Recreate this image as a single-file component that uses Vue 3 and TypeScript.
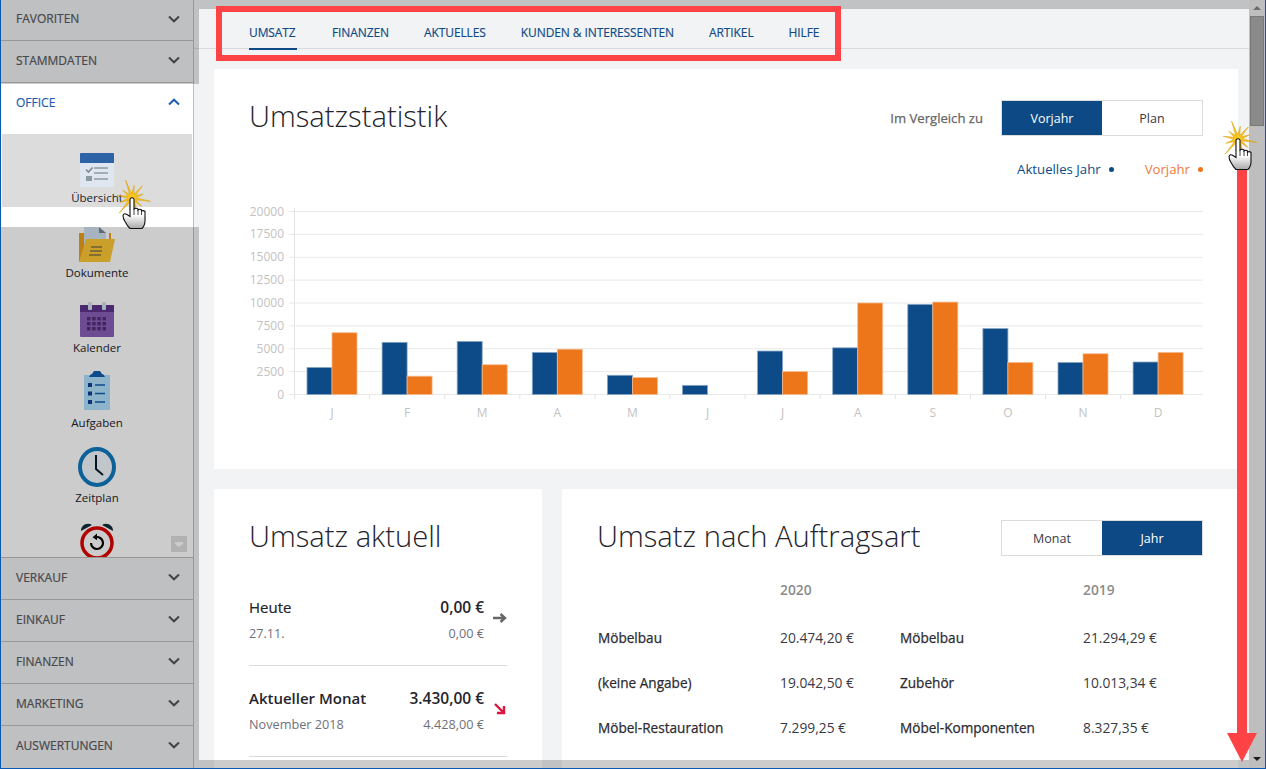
<script setup lang="ts">
const topRows: string[] = ['FAVORITEN', 'STAMMDATEN']
const bottomRows: string[] = ['VERKAUF', 'EINKAUF', 'FINANZEN', 'MARKETING', 'AUSWERTUNGEN']
const tabs: string[] = ['UMSATZ', 'FINANZEN', 'AKTUELLES', 'KUNDEN & INTERESSENTEN', 'ARTIKEL', 'HILFE']
const blue: number[] = [2950, 5700, 5800, 4600, 2100, 1000, 4750, 5100, 9850, 7200, 3500, 3550]
const orange: number[] = [6750, 2000, 3250, 4950, 1850, 0, 2500, 10000, 10100, 3500, 4450, 4600]
const months: string[] = ['J', 'F', 'M', 'A', 'M', 'J', 'J', 'A', 'S', 'O', 'N', 'D']
const ticks: number[] = [0, 2500, 5000, 7500, 10000, 12500, 15000, 17500, 20000]
const X0 = 45
const Y0 = 194.5
const yOf = (v: number): number => Y0 - (v / 20000) * 183
const rows = [
  ['Möbelbau', '20.474,20 €', 'Möbelbau', '21.294,29 €'],
  ['(keine Angabe)', '19.042,50 €', 'Zubehör', '10.013,34 €'],
  ['Möbel-Restauration', '7.299,25 €', 'Möbel-Komponenten', '8.327,35 €'],
]
const burst: string = Array.from({ length: 24 }, (_, i) => {
  const long = [19, 13, 16, 12, 20, 13, 15, 12][(i / 2 | 0) % 8]
  const r = i % 2 === 0 ? long : 4.2
  const a = (i * Math.PI) / 12 + 0.18
  return `${(20 + r * Math.cos(a)).toFixed(1)},${(20 + r * Math.sin(a)).toFixed(1)}`
}).join(' ')
const hands = [
  { left: '111px', top: '178px' },
  { left: '1217px', top: '119px' },
]
</script>

<template>
  <div class="frame">
    <aside class="side">
      <div v-for="r in topRows" :key="r" class="row">
        <span>{{ r }}</span>
        <svg class="chev" viewBox="0 0 12 8" width="12" height="8"><path d="M1 1.5 6 6.3l5-4.8" /></svg>
      </div>
      <div class="row open">
        <span>OFFICE</span>
        <svg class="chev" viewBox="0 0 12 8" width="12" height="8"><path d="M1 6.5 6 1.7l5 4.8" /></svg>
      </div>
      <div class="apps">
        <div class="app active">
          <svg width="36" height="34" viewBox="0 0 36 34">
            <rect x="1" width="34" height="34" rx="1" fill="#dfe6f0" />
            <path d="M1 1a1 1 0 0 1 1-1h32a1 1 0 0 1 1 1v9H1z" fill="#2e62a6" />
            <path d="m7 16.500 2.500 2.500 4-4.500" fill="none" stroke="#7b8a8e" stroke-width="1.600" />
            <rect x="7" y="23" width="6" height="5" fill="#8a9aa0" />
            <path d="M15 15h14M15 20h14M15 26h14" stroke="#8b9ba3" stroke-width="1.500" />
          </svg>
          <span>Übersicht</span>
        </div>
        <div class="app">
          <svg width="38" height="35" viewBox="0 0 38 35">
            <path d="M1 6h6v29H1z" fill="#eda01a" />
            <path d="M31 6h2v10h-2z" fill="#eda01a" />
            <path d="M6 0h14l8 6v18H6z" fill="#d2e0f0" />
            <path d="m21 0 7 6h-7z" fill="#768894" />
            <path d="M8 12h29l-5 23H1z" fill="#fdc836" />
            <path d="M13 20h11M12 24h12M11 28h12" stroke="#8a7640" stroke-width="1.300" />
          </svg>
          <span>Dokumente</span>
        </div>
        <div class="app">
          <svg width="34" height="35" viewBox="0 0 34 35">
            <rect y="3" width="34" height="32" rx="1" fill="#8a5fb8" />
            <path d="M1 3h32a1 1 0 0 1 1 1v6H0V4a1 1 0 0 1 1-1z" fill="#5e348c" />
            <rect x="8" width="4" height="8" rx="1" fill="#d2e0ea" />
            <rect x="22" width="4" height="8" rx="1" fill="#d2e0ea" />
            <g fill="#522d77">
              <rect v-for="n in 12" :key="n" :x="7 + ((n - 1) % 4) * 5.200" :y="15 + (((n - 1) / 4) | 0) * 5" width="3.400" height="3.400" />
            </g>
          </svg>
          <span>Kalender</span>
        </div>
        <div class="app tasks">
          <svg width="26" height="40" viewBox="0 0 26 40">
            <rect y="5" width="26" height="35" fill="#b2e2ff" />
            <path d="M5 7q1-3 3-3l2-3h6l2 3q2 0 3 3z" fill="#105db0" />
            <g fill="#104096">
              <rect x="4" y="13" width="4" height="4" />
              <rect x="4" y="21.500" width="4" height="4" />
              <rect x="4" y="30" width="4" height="4" />
            </g>
            <path d="M11 15h10M11 23.500h10M11 32h10" stroke="#105db0" stroke-width="1.300" />
          </svg>
          <span>Aufgaben</span>
        </div>
        <div class="app">
          <svg width="38" height="40" viewBox="0 0 38 40">
            <ellipse cx="19" cy="20" rx="17" ry="18" fill="#f2f8fe" stroke="#107bbf" stroke-width="4" />
            <path d="M18 8v14l7 6" fill="none" stroke="#0a1a28" stroke-width="2" />
          </svg>
          <span>Zeitplan</span>
        </div>
        <div class="app">
          <svg width="34" height="40" viewBox="0 0 34 40">
            <path d="M1 9a7 7 0 0 1 11-6zM33 9a7 7 0 0 0-11-6z" fill="#122b3c" />
            <circle cx="17" cy="21" r="15" fill="#fff" stroke="#dc0000" stroke-width="3.500" />
            <path d="M11 21a6 6 0 1 0 4.500-5.800" fill="none" stroke="#0a0a0a" stroke-width="2.200" />
            <path d="m17 11.500-4.500 3.700 4.500 3z" fill="#0a0a0a" />
          </svg>
        </div>
        <div class="more"><svg viewBox="0 0 16 16" width="16" height="16"><path d="M4 6h8v2l-4 3-4-3z" fill="#fff" /></svg></div>
      </div>
      <div v-for="r in bottomRows" :key="r" class="row low">
        <span>{{ r }}</span>
        <svg class="chev" viewBox="0 0 12 8" width="12" height="8"><path d="M1 1.500 6 6.300l5-4.800" /></svg>
      </div>
    </aside>

    <main class="main">
      <nav class="tabs">
        <a v-for="(t, i) in tabs" :key="t" :class="{ on: i === 0 }">{{ t }}</a>
      </nav>

      <section class="card stat">
        <div class="head">
          <h1>Umsatzstatistik</h1>
          <div class="cmp">
            <span class="cmp-label">Im Vergleich zu</span>
            <div class="toggle"><b class="sel">Vorjahr</b><b>Plan</b></div>
          </div>
        </div>
        <div class="legend">
          <span class="l-blue">Aktuelles Jahr<i></i></span>
          <span class="l-orange">Vorjahr<i></i></span>
        </div>
        <svg class="chart" width="989" height="240" viewBox="0 0 989 240">
          <g v-for="t in ticks" :key="t">
            <line x1="40" :x2="954" :y1="yOf(t)" :y2="yOf(t)" stroke="#e9e9e9" />
            <text x="35" :y="yOf(t) + 4" text-anchor="end" class="tick">{{ t }}</text>
          </g>
          <line :x1="X0 + 0.500" :x2="X0 + 0.500" y1="8" y2="199" stroke="#e4e4e4" />
          <g v-for="(m, i) in months" :key="i">
            <line :x1="X0 + 0.500 + i * 75.100" :x2="X0 + 0.500 + i * 75.100" :y1="Y0" y2="199" stroke="#e4e4e4" />
            <text :x="X0 + 38 + i * 75.100" y="217" text-anchor="middle" class="tick">{{ m }}</text>
            <rect :x="X0 + 13 + i * 75.100" :y="yOf(blue[i])" width="25" :height="Y0 - yOf(blue[i])" fill="#0c4b87" stroke="#85a5c3" stroke-width="0.800" />
            <rect v-if="orange[i]" :x="X0 + 38 + i * 75.100" :y="yOf(orange[i])" width="25" :height="Y0 - yOf(orange[i])" fill="#ed751a" stroke="#f6ba8c" stroke-width="0.800" />
          </g>
        </svg>
      </section>

      <div class="lower">
        <section class="card now">
          <h1>Umsatz aktuell</h1>
          <div class="kpi">
            <div class="kpi-l"><strong class="plain">Heute</strong><small>27.11.</small></div>
            <div class="kpi-r"><strong>0,00 €</strong><small>0,00 €</small></div>
            <svg class="trend" width="14" height="12" viewBox="0 0 14 12"><path d="M0 6h11M7.500 2 12 6l-4.500 4" fill="none" stroke="#666" stroke-width="2.400" /></svg>
          </div>
          <div class="kpi">
            <div class="kpi-l"><strong>Aktueller Monat</strong><small>November 2018</small></div>
            <div class="kpi-r"><strong>3.430,00 €</strong><small>4.428,00 €</small></div>
            <svg class="trend" width="14" height="12" viewBox="0 0 14 12"><path d="m2 1 8 8M11 3v7H4" fill="none" stroke="#e0143c" stroke-width="2.400" /></svg>
          </div>
        </section>
        <section class="card kind">
          <div class="head">
            <h1>Umsatz nach Auftragsart</h1>
            <div class="toggle"><b>Monat</b><b class="sel">Jahr</b></div>
          </div>
          <div class="table">
            <span></span><em>2020</em><span></span><em>2019</em>
            <template v-for="r in rows" :key="r[0]">
              <strong>{{ r[0] }}</strong><span>{{ r[1] }}</span><strong>{{ r[2] }}</strong><span>{{ r[3] }}</span>
            </template>
          </div>
        </section>
      </div>
    </main>

    <div class="scroll">
      <i class="up"></i>
      <div class="thumb"></div>
      <i class="down"></i>
    </div>

    <div class="dim d-a"></div>
    <div class="dim d-b"></div>
    <div class="dim d-c"></div>
    <div class="dim d-d"></div>

    <div class="red-box"></div>
    <svg class="red-arrow" width="32" height="596" viewBox="0 0 32 596">
      <path d="M11 0h10v565h10L16 594 1 565h10z" fill="#fd4345" />
    </svg>
    <svg v-for="h in hands" :key="h.left" class="hand" :style="h" width="44" height="54" viewBox="0 0 44 54">
      <defs>
        <linearGradient id="hg" x1="0" y1="0" x2="0" y2="1">
          <stop offset="0.550" stop-color="#fff" />
          <stop offset="1" stop-color="#a8a8a8" />
        </linearGradient>
      </defs>
      <polygon :points="burst" fill="#f7c51e" stroke="#d79a0c" stroke-width="0.500" />
      <path d="M18 21q2-2.500 4 0v10q2-1.500 4 0v1q2-1.500 3.500 0v1q2-1 3.500.5v9q0 5-3 8H18q-3-3-5-7-2-3-2-6 1-3 4-1l3 2z" fill="url(#hg)" stroke="#111" stroke-width="1.100" />
      <path d="M22 31v6M26 32v5M29.500 33v4" stroke="#111" stroke-width="0.800" fill="none" />
    </svg>
  </div>
</template>

<style>
html, body { margin: 0; padding: 0; background: #f2f3f5; overflow: hidden; }
</style>

<style scoped>
.frame {
  position: relative;
  width: 1266px;
  height: 769px;
  box-sizing: border-box;
  border: 1px solid #0a5ab5;
  border-top: 0;
  display: flex;
  overflow: hidden;
  background: #f2f3f5;
  font-family: "Open Sans", "Noto Sans", "Liberation Sans", sans-serif;
  font-size: 12px;
  color: #2b2b33;
}
.side {
  width: 192px;
  flex: none;
  display: flex;
  flex-direction: column;
  background: #fff;
  border-right: 1px solid #bfbfbf;
  box-sizing: content-box;
}
.row {
  height: 42px;
  box-sizing: border-box;
  flex: none;
  display: flex;
  align-items: center;
  justify-content: space-between;
  padding: 0 13px 3px 15px;
  background: #eff0f2;
  border-bottom: 1px solid #bfbfbf;
  color: #5a5a60;
  font-size: 12px;
  font-weight: 500;
  -webkit-text-stroke: 0.2px currentColor;
}
.row:first-child { height: 41px; }
.chev { fill: none; stroke: #555; stroke-width: 2; }
.row.open {
  background: #fff;
  border: 0;
  height: 38px;
  margin-top: 1px;
  padding-bottom: 2px;
  color: #1f5eb5;
}
.row.open .chev { stroke: #1f5eb5; }
.row.low { border-bottom: 0; border-top: 1px solid #bfbfbf; }
.row.low:last-child { height: 43px; padding-bottom: 4px; }
.apps {
  position: relative;
  height: 435px;
  overflow: hidden;
  padding-top: 12px;
  box-sizing: border-box;
  flex: none;
  background: #fff;
}
.app {
  width: 190px;
  margin-left: 1px;
  height: 75px;
  display: flex;
  flex-direction: column;
  align-items: center;
  justify-content: flex-start;
  position: relative;
  color: #22222c;
}
.app svg { position: absolute; bottom: 22px; left: 50%; transform: translateX(-50%); }
.app.tasks svg { bottom: 24px; }
.app span { position: absolute; top: 56px; line-height: 16px; font-size: 11.500px; }
.app.active { background: #dcdcdc; height: 73px; margin-bottom: 2px; }
.app.active svg { bottom: 20px; }
.more {
  position: absolute;
  right: 6px;
  bottom: 5px;
  width: 16px;
  height: 16px;
  background: #dedede;
}
.main {
  flex: 1;
  min-width: 0;
  height: 768px;
  overflow: hidden;
  padding-left: 20px;
}
.tabs {
  margin-left: -20px;
  height: 49px;
  box-sizing: border-box;
  padding-left: 55px;
  display: flex;
  gap: 35px;
  border-bottom: 1px solid #d9dadd;
}
.tabs a {
  height: 49px;
  box-sizing: border-box;
  padding-top: 24px;
  line-height: 17px;
  font-size: 12px;
  font-weight: 500;
  color: #0d4a85;
  letter-spacing: -0.1px;
  -webkit-text-stroke: 0.15px currentColor;
}
.tabs a.on { border-bottom: 2px solid #0d4a85; height: 50px; min-width: 48px; }
.card { background: #fff; box-sizing: border-box; }
.stat {
  margin: 20px 11px 20px 0;
  height: 400px;
  padding: 31px 35px 0;
}
h1 {
  margin: 0;
  font-size: 29.200px;
  line-height: 36px;
  font-weight: 300;
  color: #24242c;
}
.head h1 { margin-top: -4px; }
.head { display: flex; justify-content: space-between; align-items: center; }
.cmp { display: flex; align-items: center; gap: 18px; }
.cmp-label { font-weight: 500; color: #666; font-size: 13.100px; -webkit-text-stroke: 0.25px currentColor; }
.toggle {
  display: flex;
  width: 202px;
  height: 36px;
  box-sizing: border-box;
  border: 1px solid #dcdcdc;
}
.toggle b {
  flex: 1;
  display: flex;
  align-items: center;
  justify-content: center;
  font-weight: 400;
  font-size: 12.500px;
  color: #3a3a44;
}
.toggle b.sel { background: #0d4a85; color: #fff; }
.legend {
  display: flex;
  justify-content: flex-end;
  gap: 31px;
  margin-top: 24px;
  font-size: 13.200px;
  line-height: 18px;
}
.legend i {
  display: inline-block;
  width: 5px;
  height: 5px;
  border-radius: 50%;
  margin-left: 8px;
  vertical-align: 2px;
}
.l-blue { color: #0d4a85; }
.l-blue i { background: #0d4a85; }
.l-orange { color: #ed7a3a; }
.l-orange i { background: #ed751a; }
.chart { display: block; margin-top: 22px; }
.tick { font-size: 12px; fill: #c2c2c2; font-family: "Open Sans", sans-serif; }
.lower { display: flex; gap: 20px; margin-right: 11px; }
.now { width: 328px; flex: none; padding: 29px 35px 0; height: 300px; }
.kpi {
  position: relative;
  display: flex;
  justify-content: space-between;
  height: 91px;
  box-sizing: border-box;
  padding: 23px 23px 0 0;
  border-bottom: 1px solid #dbdbdb;
  width: 258px;
}
.now h1 { margin-bottom: 21px; }
.kpi strong { display: block; font-size: 15px; font-weight: 600; line-height: 19px; color: #24242c; }
.kpi-r strong { font-size: 15.500px; }
.kpi strong.plain { font-weight: 500; -webkit-text-stroke: 0.2px currentColor; }
.kpi small { display: block; font-size: 12.700px; line-height: 16px; color: #71717a; margin-top: 8px; }
.kpi-r { text-align: right; }
.trend { position: absolute; right: 0; top: 37px; }
.kind { flex: 1; padding: 31px 35px 0; height: 300px; }
.table {
  display: grid;
  grid-template-columns: 182px 120px 183px 1fr;
  grid-template-rows: 51px;
  grid-auto-rows: 45px;
  align-items: center;
  margin: 8px 0 0 1px;
  font-size: 13.800px;
  color: #3a3a44;
}
.table em { font-style: normal; font-weight: 600; font-size: 13.800px; color: #8c8c8c; }
.table strong { font-weight: 500; color: #2b2b33; font-size: 13.600px; -webkit-text-stroke: 0.25px currentColor; }
.scroll {
  position: relative;
  width: 16px;
  flex: none;
  height: 768px;
  background: #eee;
}
.thumb {
  position: absolute;
  left: 1px;
  top: 16px;
  width: 14px;
  height: 110px;
  box-sizing: border-box;
  background: #adadad;
  border: 1px solid #979797;
}
.up, .down {
  position: absolute;
  left: 4px;
  border-left: 4px solid transparent;
  border-right: 4px solid transparent;
}
.up { top: 6px; border-bottom: 4px solid #888; }
.down { top: 757px; border-top: 4px solid #222; }
.dim { position: absolute; background: rgba(0, 0, 0, 0.2); pointer-events: none; }
.d-a { left: 0; top: 0; width: 198px; height: 84px; }
.d-b { left: 0; top: 227px; width: 198px; height: 541px; }
.d-c { left: 198px; top: 0; width: 1050px; height: 9px; }
.d-d { left: 198px; top: 760px; width: 1050px; height: 8px; }
.scroll::after { content: ""; position: absolute; inset: 0; background: rgba(0, 0, 0, 0.2); }
.red-box {
  position: absolute;
  left: 215px;
  top: 6px;
  width: 625px;
  height: 55px;
  box-sizing: border-box;
  border: 6px solid #fd4345;
}
.red-arrow { position: absolute; left: 1225px; top: 168px; }
.hand { position: absolute; }
</style>
